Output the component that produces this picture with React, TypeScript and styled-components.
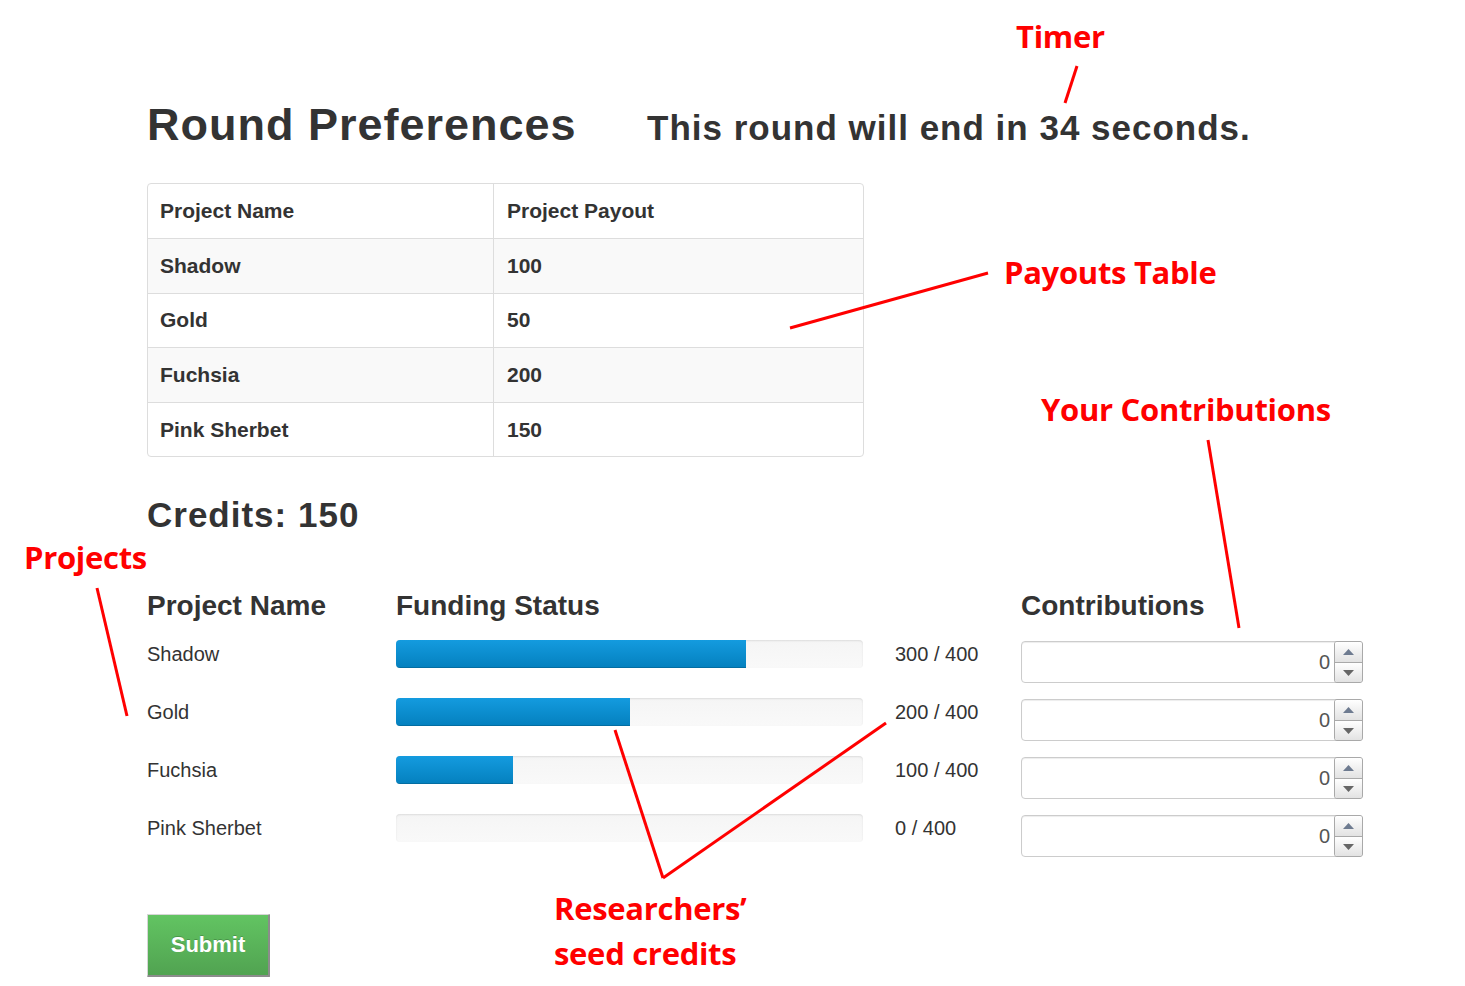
import React from "react";
import styled, { createGlobalStyle } from "styled-components";

const GlobalStyle = createGlobalStyle`
  html, body { margin: 0; padding: 0; background: #fff; }
  body { font-family: "Liberation Sans", Arial, Helvetica, sans-serif; color: #333; }
`;

const Page = styled.div`
  position: relative;
  width: 1465px;
  height: 986px;
  overflow: hidden;
  box-sizing: border-box;
  padding: 102px 0 0 147px;
`;

const Header = styled.header`
  display: grid;
  grid-template-columns: 500px auto;
  align-items: baseline;
`;

const Title = styled.h1`
  margin: 0;
  font-size: 45px;
  line-height: 45px;
  font-weight: 700;
  letter-spacing: 1px;
  color: #333;
`;

const TimerText = styled.h2`
  margin: 0;
  font-size: 35px;
  line-height: 45px;
  font-weight: 700;
  letter-spacing: 1px;
  color: #333;
`;

const PayoutTable = styled.table`
  margin-top: 33px;
  width: 717px;
  border: 1px solid #ddd;
  border-radius: 4px;
  border-collapse: separate;
  border-spacing: 0;
  font-size: 21px;
  font-weight: 700;
  color: #333;
`;

const TRow = styled.tr<{ $striped?: boolean }>`
  background: ${(p) => (p.$striped ? "#f9f9f9" : "transparent")};
`;

const TCell = styled.td<{ $first?: boolean; $col: number }>`
  padding: 0 0 0 ${(p) => (p.$col === 0 ? 12 : 13)}px;
  height: ${(p) => (p.$first ? 54 : 53.6)}px;
  line-height: 24px;
  border-top: ${(p) => (p.$first ? "none" : "1px solid #ddd")};
  border-left: ${(p) => (p.$col === 1 ? "1px solid #ddd" : "none")};
  width: ${(p) => (p.$col === 0 ? "333px" : "auto")};
  vertical-align: middle;
`;

const Credits = styled.h2`
  margin: 40px 0 0;
  font-size: 35px;
  line-height: 35px;
  font-weight: 700;
  letter-spacing: 1px;
  color: #333;
`;

const columns = "249px 467px 158px 342px";

const FundingHeader = styled.div`
  display: grid;
  grid-template-columns: ${columns};
  margin: 60px 0 20px;
`;

const ColumnTitle = styled.h3<{ $col: number }>`
  margin: 0;
  grid-column: ${(p) => p.$col};
  font-size: 28px;
  line-height: 28px;
  font-weight: 700;
  color: #333;
`;

const FundingRow = styled.div`
  display: grid;
  grid-template-columns: ${columns};
  align-items: start;
  height: 58px;
`;

const ProjectName = styled.div`
  font-size: 20px;
  line-height: 28px;
  color: #333;
`;

const Track = styled.div`
  height: 28px;
  border-radius: 4px;
  overflow: hidden;
  background: linear-gradient(#f5f5f5, #f9f9f9);
  box-shadow: inset 0 1px 2px rgba(0, 0, 0, 0.1);
`;

const Fill = styled.div`
  height: 100%;
  background: linear-gradient(#149bdf, #0480be);
  box-shadow: inset 0 -1px 0 rgba(0, 0, 0, 0.15);
`;

const StatusLabel = styled.div`
  padding-left: 32px;
  font-size: 20px;
  line-height: 28px;
  color: #333;
`;

const NumberBox = styled.div`
  margin-top: 1px;
  height: 42px;
  box-sizing: border-box;
  border: 1px solid #ccc;
  border-radius: 4px;
  box-shadow: inset 0 1px 1px rgba(0, 0, 0, 0.075);
  display: flex;
  justify-content: flex-end;
  align-items: center;
`;

const NumberValue = styled.span`
  font-size: 20px;
  color: #555;
  margin-right: 4px;
`;

const Spinner = styled.div`
  align-self: stretch;
  margin: -1px -1px -1px 0;
  width: 29px;
  box-sizing: border-box;
  border: 1px solid #a9a9a9;
  border-radius: 3px;
  display: flex;
  flex-direction: column;
  overflow: hidden;
`;

const SpinButton = styled.div<{ $down?: boolean }>`
  flex: 1;
  display: flex;
  align-items: center;
  justify-content: center;
  background: linear-gradient(#ffffff, #e2e2e2);
  border-top: ${(p) => (p.$down ? "1px solid #a9a9a9" : "none")};
`;

const SubmitButton = styled.button`
  margin-top: 42px;
  width: 123px;
  height: 63px;
  box-sizing: border-box;
  padding: 0;
  border-style: solid;
  border-width: 1px 2px 2px 1px;
  border-color: #d6d6d6 #8c8c8c #8c8c8c #d6d6d6;
  border-radius: 1px;
  background: linear-gradient(#62c462, #51a351);
  color: #fff;
  font-family: "Liberation Sans", Arial, sans-serif;
  font-size: 22px;
  font-weight: 700;
  text-shadow: 0 -1px 0 rgba(0, 0, 0, 0.2);
  cursor: pointer;
`;

const Note = styled.div<{ $left: number; $top: number }>`
  position: absolute;
  left: ${(p) => p.$left}px;
  top: ${(p) => p.$top}px;
  font-family: "Open Sans", "Liberation Sans", sans-serif;
  font-weight: 700;
  font-size: 31px;
  letter-spacing: -0.3px;
  line-height: 45px;
  color: #ff0000;
  white-space: pre;
`;

const Overlay = styled.svg`
  position: absolute;
  left: 0;
  top: 0;
  pointer-events: none;
`;

const payouts = [
  ["Shadow", "100"],
  ["Gold", "50"],
  ["Fuchsia", "200"],
  ["Pink Sherbet", "150"],
];

const funding = [
  { name: "Shadow", value: 300 },
  { name: "Gold", value: 200 },
  { name: "Fuchsia", value: 100 },
  { name: "Pink Sherbet", value: 0 },
];

const Spin = () => (
  <Spinner>
    <SpinButton>
      <svg width="11" height="6" viewBox="0 0 11 6">
        <polygon points="0,6 11,6 5.5,0" fill="#6e7b90" />
      </svg>
    </SpinButton>
    <SpinButton $down>
      <svg width="11" height="6" viewBox="0 0 11 6">
        <polygon points="0,0 11,0 5.5,6" fill="#666" />
      </svg>
    </SpinButton>
  </Spinner>
);

const lines: [number, number, number, number][] = [
  [1077, 66, 1065, 103],
  [988, 273, 790, 328],
  [1208, 440, 1239, 628],
  [97, 588, 127, 716],
  [615, 730, 663, 878],
  [886, 723, 663, 878],
];

export default function App() {
  return (
    <>
      <GlobalStyle />
      <Page>
        <Header>
          <Title>Round Preferences</Title>
          <TimerText>This round will end in 34 seconds.</TimerText>
        </Header>

        <PayoutTable>
          <tbody>
            <TRow>
              <TCell $first $col={0}>Project Name</TCell>
              <TCell $first $col={1}>Project Payout</TCell>
            </TRow>
            {payouts.map(([name, pay], i) => (
              <TRow key={name} $striped={i % 2 === 0}>
                <TCell $col={0}>{name}</TCell>
                <TCell $col={1}>{pay}</TCell>
              </TRow>
            ))}
          </tbody>
        </PayoutTable>

        <Credits>Credits: 150</Credits>

        <FundingHeader>
          <ColumnTitle $col={1}>Project Name</ColumnTitle>
          <ColumnTitle $col={2}>Funding Status</ColumnTitle>
          <ColumnTitle $col={4}>Contributions</ColumnTitle>
        </FundingHeader>

        {funding.map((f) => (
          <FundingRow key={f.name}>
            <ProjectName>{f.name}</ProjectName>
            <Track>
              <Fill style={{ width: `${(f.value / 400) * 100}%` }} />
            </Track>
            <StatusLabel>{f.value} / 400</StatusLabel>
            <NumberBox>
              <NumberValue>0</NumberValue>
              <Spin />
            </NumberBox>
          </FundingRow>
        ))}

        <SubmitButton>Submit</SubmitButton>

        <Overlay width="1465" height="986" viewBox="0 0 1465 986">
          {lines.map(([x1, y1, x2, y2], i) => (
            <line key={i} x1={x1} y1={y1} x2={x2} y2={y2} stroke="#ff0000" strokeWidth="3" />
          ))}
        </Overlay>

        <Note $left={1016} $top={14}>Timer</Note>
        <Note $left={1004} $top={250}>Payouts Table</Note>
        <Note $left={1041} $top={387}>Your Contributions</Note>
        <Note $left={24} $top={535}>Projects</Note>
        <Note $left={554} $top={886}>Researchers’</Note>
        <Note $left={554} $top={931}>seed credits</Note>
      </Page>
    </>
  );
}
